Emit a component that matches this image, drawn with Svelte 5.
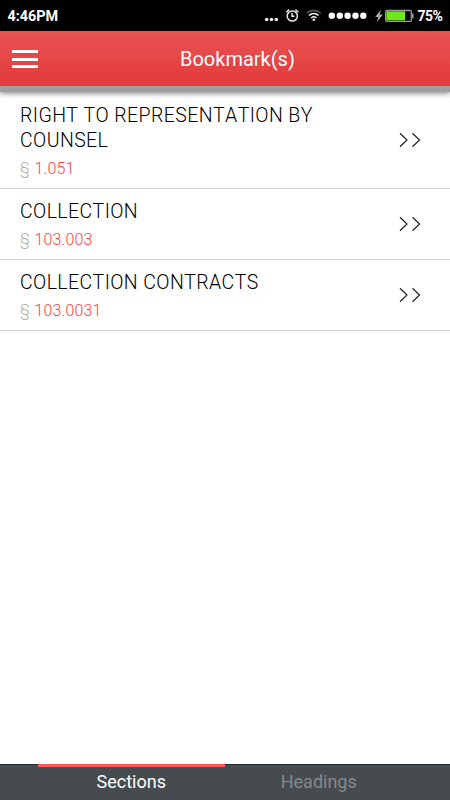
<script>
  const bookmarks = [
    { title: 'RIGHT TO REPRESENTATION BY COUNSEL', section: '1.051' },
    { title: 'COLLECTION', section: '103.003' },
    { title: 'COLLECTION CONTRACTS', section: '103.0031' }
  ]

  const tabs = ['Sections', 'Headings']
  let active = $state('Sections')
</script>

<div class="screen">
  <div class="status">
    <span class="time">4:46PM</span>
    <svg class="icons" width="160" height="31" viewBox="255 0 160 31">
      <g fill="#e8e8e8">
        <circle cx="266.7" cy="19.5" r="1.8" />
        <circle cx="271.5" cy="19.5" r="1.8" />
        <circle cx="276.3" cy="19.5" r="1.8" />
      </g>
      <!-- alarm -->
      <g fill="none" stroke="#e8e8e8" stroke-width="1.5">
        <circle cx="292.3" cy="16" r="5.1" />
        <path d="M292 13v3.3h2.6M286.2 12.2l3-2.6M295.4 9.6l3 2.6" />
      </g>
      <!-- wifi -->
      <g fill="none" stroke-width="1.6">
        <path d="M306.8 13.2a10 10 0 0 1 14 0" stroke="#555" />
        <path d="M309 15.5a6.9 6.9 0 0 1 9.6 0" stroke="#f0f0f0" />
        <path d="M311.2 18a3.8 3.8 0 0 1 5.2 0" stroke="#f0f0f0" />
      </g>
      <circle cx="313.8" cy="19.8" r="1.3" fill="#f0f0f0" />
      <!-- signal -->
      <g fill="#fff">
        {#each [331.8, 339.8, 347.6, 355.5, 363.3] as cx}
          <circle {cx} cy="15.8" r="3.2" />
        {/each}
      </g>
      <!-- battery -->
      <path d="M381 9.5l-5.8 7.5h3.1l-1.7 5.4 6.3-7.8h-3.2z" fill="#aaa" />
      <rect x="385.7" y="10.5" width="25.6" height="10.8" rx="1" fill="#000" stroke="#999" stroke-width="1.3" />
      <rect x="386.4" y="11.4" width="18.7" height="9" fill="#6fe81a" />
      <path d="M412.8 13.4v5" stroke="#999" stroke-width="1.6" />
    </svg>
    <span class="percent">75%</span>
  </div>

  <header>
    <button class="menu" aria-label="Menu"><i></i><i></i><i></i></button>
    <h1>Bookmark(s)</h1>
  </header>

  <main>
    {#each bookmarks as bookmark}
      <article>
        <div class="text">
          <h2>{bookmark.title}</h2>
          <p><span>§</span> {bookmark.section}</p>
        </div>
        <svg width="24" height="16" viewBox="0 0 24 16">
          <path d="M2 1.2l7 6.8-7 6.8M14.5 1.2l7 6.8-7 6.8" />
        </svg>
      </article>
    {/each}
  </main>

  <nav>
    {#each tabs as tab}
      <button class:active={active === tab} onclick={() => active = tab}>{tab}</button>
    {/each}
  </nav>
</div>

<style>
  :global(body) {
    background: #fff;
  }

  .screen {
    display: flex;
    flex-direction: column;
    height: 800px;
    overflow: hidden;
    font-family: Roboto, sans-serif;
  }

  .status {
    display: flex;
    align-items: center;
    height: 31px;
    box-sizing: border-box;
    padding: 0 0 0 7.5px;
    background: #000;
    color: #fff;
    font-size: 14.4px;
    font-weight: 700;
  }

  .time {
    width: 247.5px;
    padding-top: 1px;
  }

  .icons {
    flex: none;
  }

  .percent {
    padding: 1px 0 0 2.5px;
    font-size: 14px;
    letter-spacing: -0.5px;
  }

  header {
    position: relative;
    display: flex;
    align-items: center;
    height: 55px;
    background: linear-gradient(#e75353, #e43a3a);
    box-shadow: 0 6px 1px #9f9f9f, 0 8px 5px #9b9b9b;
  }

  .menu {
    display: flex;
    flex-direction: column;
    gap: 4.5px;
    width: 26px;
    margin: 1px 0 0 12px;
    padding: 0;
    border: none;
    background: none;
  }

    .menu i {
      height: 3px;
      background: #fff;
    }

  h1 {
    margin: 1px 0 0 142px;
    color: #fff;
    font-size: 20px;
    font-weight: 400;
    line-height: 24px;
  }

  main {
    flex: 1;
    padding-top: 7px;
  }

  article {
    display: flex;
    align-items: center;
    justify-content: space-between;
    padding: 9px 28px 8px 20px;
    border-bottom: 1px solid #d4d4d4;
  }

    article svg {
      flex: none;
      margin-bottom: 2px;
      fill: none;
      stroke: #222;
      stroke-width: 1.2;
    }

  .text {
    width: 320px;
  }

  h2 {
    margin: 0;
    padding-top: 1px;
    color: #000;
    font-size: 19.5px;
    font-weight: 300;
    font-kerning: none;
    line-height: 25px;
    letter-spacing: 0.4px;
  }

  p {
    margin: 4px 0 -1px;
    color: #ff4046;
    font-size: 16px;
    font-weight: 300;
    line-height: 24px;
    letter-spacing: 0.15px;
  }

    p span {
      margin-right: 0.6px;
      color: #aaa;
    }

  nav {
    display: flex;
    height: 36px;
    box-sizing: border-box;
    padding: 0 37.5px;
    background: #464b4f;
    box-shadow: inset 0 1px #1f2b33;
  }

    nav button {
      flex: 1;
      padding: 0 0 4px;
      border: none;
      border-top: 3px solid transparent;
      background: none;
      color: #85888a;
      font: 400 18px/29px Roboto, sans-serif;
    }

    nav button.active {
      border-top-color: #fb5757;
      color: #fff;
    }
</style>
